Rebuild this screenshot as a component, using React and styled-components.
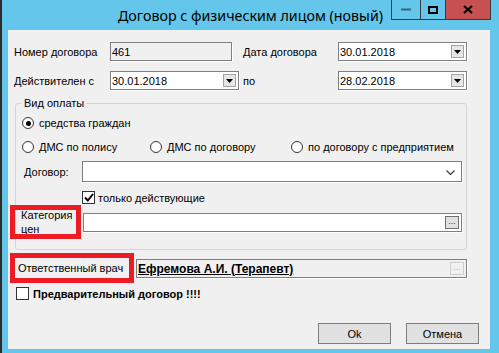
import styled, { createGlobalStyle } from "styled-components";

const GlobalStyle = createGlobalStyle`
  html, body { margin: 0; padding: 0; background: #fff; }
  body {
    font-family: "Liberation Sans", Arial, sans-serif;
    font-size: 11px;
    color: #000;
  }
  * { box-sizing: border-box; }
`;

const Window = styled.div`
  width: 499px;
  height: 353px;
  background: #63c6ea;
  border-left: 2px solid #2e2e2e;
  display: flex;
  flex-direction: column;
  padding: 0 9px 4px 6px;
`;

const TitleBar = styled.div`
  height: 30px;
  margin: 0 -9px 0 -6px;
  display: grid;
  grid-template-columns: 1fr auto 1fr;
  align-items: center;
`;

const Title = styled.div`
  grid-column: 2;
  font-family: "Noto Sans", "Open Sans", sans-serif;
  font-size: 14.25px;
  color: #000;
  white-space: nowrap;
`;

const Controls = styled.div`
  grid-column: 3;
  justify-self: end;
  align-self: start;
  margin-right: 8px;
  display: flex;
`;

const CtlButton = styled.div`
  width: ${(p) => p.$w}px;
  height: 20px;
  border: 1px solid #3a3a3a;
  border-top: none;
  margin-left: -1px;
  background: ${(p) => (p.$close ? "#c75050" : "transparent")};
  display: flex;
  align-items: center;
  justify-content: center;
`;

const Client = styled.div`
  flex: 1;
  background: #f0f0f0;
  display: flex;
  flex-direction: column;
  padding-top: 12px;
`;

const Row = styled.div`
  display: flex;
  align-items: center;
  height: ${(p) => p.$h || 19}px;
  margin-top: ${(p) => p.$mt || 0}px;
  padding-left: ${(p) => p.$pl || 0}px;
  padding-right: ${(p) => p.$pr || 0}px;
  justify-content: ${(p) => p.$justify || "flex-start"};
  gap: ${(p) => p.$gap || 0}px;
`;

const FieldLabel = styled.div`
  width: ${(p) => p.$w}px;
  margin-left: ${(p) => p.$ml || 0}px;
  flex: none;
  white-space: nowrap;
`;

const MarkedLabel = styled.div`
  position: relative;
  flex: none;
  width: ${(p) => p.$w}px;
  margin-left: ${(p) => p.$ml || 0}px;
  line-height: ${(p) => p.$lh || 13}px;
  &::after {
    content: "";
    position: absolute;
    top: ${(p) => p.$box[0]}px;
    right: ${(p) => p.$box[1]}px;
    bottom: ${(p) => p.$box[2]}px;
    left: ${(p) => p.$box[3]}px;
    border: 5px solid #ed1c24;
    pointer-events: none;
  }
`;

const Field = styled.div`
  position: relative;
  flex: none;
  width: ${(p) => p.$w}px;
  height: ${(p) => p.$h || 19}px;
  background: ${(p) => (p.$gray ? "#f0f0f0" : "#fff")};
  border: 1px solid #7f7f7f;
  box-shadow: 1px 1px 0 #fff;
  display: flex;
  align-items: center;
  padding-left: 1px;
  white-space: nowrap;
`;

const DropButton = styled.div`
  position: absolute;
  right: 2px;
  top: 2px;
  width: 13px;
  height: 13px;
  background: #e6e6e6;
  border: 1px solid #a3a3a3;
  display: flex;
  align-items: center;
  justify-content: center;
`;

const Chevron = styled.svg`
  position: absolute;
  right: 6px;
  top: 8px;
`;

const EllipsisButton = styled.div`
  position: absolute;
  right: 2px;
  top: 2px;
  width: 14px;
  height: 13px;
  background: ${(p) => (p.$disabled ? "#f0f0f0" : "#e1e1e1")};
  border: 1px solid ${(p) => (p.$disabled ? "#cfcfcf" : "#707070")};
  color: ${(p) => (p.$disabled ? "#b5b5b5" : "#333")};
  font-size: 9px;
  line-height: 9px;
  text-align: center;
`;

const GroupBox = styled.div`
  position: relative;
  margin: 13px 0 0 7px;
  width: 452px;
  height: 147px;
  border: 1px solid #d5d5d5;
  border-radius: 3px;
  padding-left: 6px;
`;

const Legend = styled.span`
  position: absolute;
  top: -7px;
  left: 6px;
  padding: 0 2px;
  background: #f0f0f0;
  line-height: 13px;
`;

const RadioItem = styled.label`
  display: flex;
  align-items: center;
  width: ${(p) => (p.$w ? `${p.$w}px` : "auto")};
  flex: none;
  gap: 5px;
`;

const RadioCircle = styled.span`
  position: relative;
  width: 12px;
  height: 12px;
  border-radius: 50%;
  border: 1px solid #333;
  background: #fff;
  flex: none;
  ${(p) =>
    p.$checked &&
    `&::after {
      content: "";
      position: absolute;
      left: 2.5px;
      top: 2.5px;
      width: 5px;
      height: 5px;
      border-radius: 50%;
      background: #000;
    }`}
`;

const CheckItem = styled.label`
  display: flex;
  align-items: center;
  gap: ${(p) => p.$gap || 3}px;
  margin-left: ${(p) => p.$ml || 0}px;
  font-weight: ${(p) => (p.$bold ? 700 : 400)};
`;

const CheckBox = styled.span`
  width: 13px;
  height: 13px;
  border: 1px solid #333;
  background: #fff;
  flex: none;
  display: flex;
  align-items: center;
  justify-content: center;
`;

const DoctorName = styled.span`
  font-weight: 700;
  text-decoration: underline;
  font-size: 12px;
`;

const Button = styled.div`
  width: 73px;
  height: 21px;
  background: #e1e1e1;
  border: 1px solid #7d7d7d;
  display: flex;
  align-items: center;
  justify-content: center;
`;

function DateCombo({ value }) {
  return (
    <Field $w={129}>
      {value}
      <DropButton>
        <svg width="7" height="4" viewBox="0 0 7 4">
          <path d="M0 0h7L3.5 4z" fill="#000" />
        </svg>
      </DropButton>
    </Field>
  );
}

function Radio({ checked, w, children }) {
  return (
    <RadioItem $w={w}>
      <RadioCircle $checked={checked} />
      {children}
    </RadioItem>
  );
}

function Check({ checked, ml, bold, gap, children }) {
  return (
    <CheckItem $ml={ml} $bold={bold} $gap={gap}>
      <CheckBox>
        {checked && (
          <svg width="10" height="9" viewBox="0 0 10 9">
            <path d="M1 4.5l2.8 3L9 1" stroke="#000" strokeWidth="2" fill="none" />
          </svg>
        )}
      </CheckBox>
      {children}
    </CheckItem>
  );
}

export default function App() {
  return (
    <>
      <GlobalStyle />
      <Window>
        <TitleBar>
          <Title>Договор с физическим лицом (новый)</Title>
          <Controls>
            <CtlButton $w={30}>
              <svg width="10" height="3" viewBox="0 0 10 3">
                <rect width="10" height="2" y="0.5" fill="#2b6a80" />
              </svg>
            </CtlButton>
            <CtlButton $w={26}>
              <svg width="10" height="8" viewBox="0 0 10 8">
                <rect x="1" y="1" width="8" height="6" fill="none" stroke="#000" strokeWidth="2" />
              </svg>
            </CtlButton>
            <CtlButton $w={46} $close>
              <svg width="10" height="9" viewBox="0 0 10 9">
                <path d="M1 1l8 7M9 1l-8 7" stroke="#000" strokeWidth="2.2" />
              </svg>
            </CtlButton>
          </Controls>
        </TitleBar>
        <Client>
          <Row $pl={6}>
            <FieldLabel $w={96}>Номер договора</FieldLabel>
            <Field $w={122} $gray>461</Field>
            <FieldLabel $w={95} $ml={11}>Дата договора</FieldLabel>
            <DateCombo value="30.01.2018" />
          </Row>
          <Row $pl={6} $mt={10}>
            <FieldLabel $w={96}>Действителен с</FieldLabel>
            <DateCombo value="30.01.2018" />
            <FieldLabel $w={95} $ml={4}>по</FieldLabel>
            <DateCombo value="28.02.2018" />
          </Row>

          <GroupBox>
            <Legend>Вид оплаты</Legend>
            <Row $h={12} $mt={13}>
              <Radio checked>средства граждан</Radio>
            </Row>
            <Row $h={12} $mt={12}>
              <Radio w={128}>ДМС по полису</Radio>
              <Radio w={141}>ДМС по договору</Radio>
              <Radio>по договору с предприятием</Radio>
            </Row>
            <Row $h={21} $mt={8}>
              <FieldLabel $w={58} $ml={2}>Договор:</FieldLabel>
              <Field $w={380} $h={21}>
                <Chevron width="9" height="5" viewBox="0 0 9 5">
                  <path d="M0.5 0.5l4 4 4-4" stroke="#444" strokeWidth="1.3" fill="none" />
                </Chevron>
              </Field>
            </Row>
            <Row $h={13} $mt={9}>
              <Check checked ml={60}>только действующие</Check>
            </Row>
            <Row $h={28} $mt={4}>
              <MarkedLabel $w={62} $ml={-1} $lh={14} $box={[-3, 2, -3, -11]}>
                Категория
                <br />
                цен
              </MarkedLabel>
              <Field $w={379}>
                <EllipsisButton>...</EllipsisButton>
              </Field>
            </Row>
          </GroupBox>

          <Row $mt={9} $pl={10}>
            <MarkedLabel $w={118} $lh={19} $box={[-6, 2, -5, -8]}>
              Ответственный врач
            </MarkedLabel>
            <Field $w={331} $gray>
              <DoctorName>Ефремова А.И. (Терапевт)</DoctorName>
              <EllipsisButton $disabled>...</EllipsisButton>
            </Field>
          </Row>
          <Row $h={13} $mt={9} $pl={8}>
            <Check bold gap={4}>Предварительный договор !!!!</Check>
          </Row>
          <Row $h={21} $mt={23} $justify="flex-end" $pr={11} $gap={15}>
            <Button>Ok</Button>
            <Button>Отмена</Button>
          </Row>
        </Client>
      </Window>
    </>
  );
}
